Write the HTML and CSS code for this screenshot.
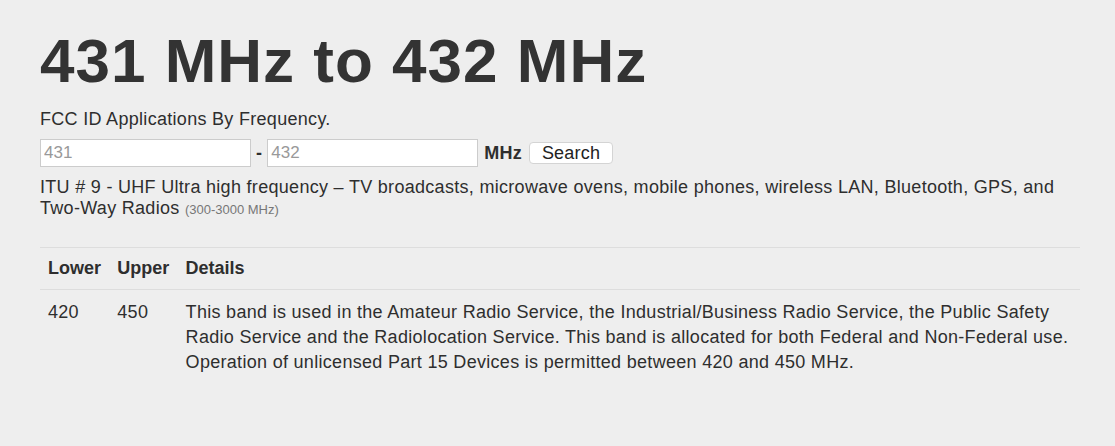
FILE: index.html
```html
<!DOCTYPE html>
<html lang="en">
<head>
    <meta charset="UTF-8">
    <meta name="viewport" content="width=device-width, initial-scale=1.0">
    <title>431 MHz to 432 MHz</title>
    <link rel="stylesheet" href="styles.css">
</head>
<body>

    <div class="container">
        <h1>431 MHz to 432 MHz</h1>
        <p class="lead">FCC ID Applications By Frequency.</p>

        <form class="freq-form">
            <input type="text" class="freq-input" placeholder="431">
            <span class="dash">-</span>
            <input type="text" class="freq-input" placeholder="432">
            <span class="unit">MHz</span>
            <button type="button" class="btn">Search</button>
        </form>

        <p class="itu">ITU # 9 - UHF Ultra high frequency &ndash; TV broadcasts, microwave ovens, mobile phones, wireless LAN, Bluetooth, GPS, and<br>Two-Way Radios <small>(300-3000 MHz)</small></p>

        <hr>

        <table class="bands">
            <thead>
                <tr>
                    <th>Lower</th>
                    <th>Upper</th>
                    <th>Details</th>
                </tr>
            </thead>
            <tbody>
                <tr>
                    <td>420</td>
                    <td>450</td>
                    <td>This band is used in the Amateur Radio Service, the Industrial/Business Radio Service, the Public Safety<br>Radio Service and the Radiolocation Service. This band is allocated for both Federal and Non-Federal use.<br>Operation of unlicensed Part 15 Devices is permitted between 420 and 450 MHz.</td>
                </tr>
            </tbody>
        </table>
    </div>

</body>
</html>
```

FILE: styles.css
```css
/* Page background and base type */
body {
    background-color: #eeeeee;
    color: #2e2e2e;
    font-family: 'Liberation Sans', Arial, sans-serif;
    font-size: 18px;
    letter-spacing: 0.3px;
    line-height: 21px;
    margin: 0;
}

.container {
    width: 1040px;
    margin: 0 0 0 40px;
    padding-top: 27px;
}

h1 {
    font-size: 62px;
    font-weight: bold;
    letter-spacing: 1px;
    line-height: 68px;
    color: #333333;
    margin: 0 0 14px 0;
}

.lead {
    margin: 0 0 9px 0;
}

.freq-form {
    display: flex;
    align-items: center;
    margin-bottom: 10px;
}

.freq-input {
    width: 211px;
    height: 28px;
    box-sizing: border-box;
    border: 1px solid #cccccc;
    background-color: #ffffff;
    font-family: inherit;
    font-size: 17px;
    padding: 2px 3px;
    margin: 0;
    color: #333333;
}

.freq-input::placeholder {
    color: #999999;
}

.dash {
    margin: 0 5px 0 5px;
    font-weight: bold;
}

.unit {
    font-weight: bold;
    letter-spacing: 0.2px;
    margin: 0 7px 0 6px;
}

.btn {
    height: 22px;
    padding: 0 12px;
    background-color: #ffffff;
    border: 1px solid #d4d4d4;
    border-radius: 4px;
    font-family: inherit;
    font-size: 18px;
    letter-spacing: 0.2px;
    color: #222222;
    line-height: 20px;
}

.itu {
    margin: 0;
}

.itu small {
    font-size: 13px;
    letter-spacing: 0;
    color: #777777;
}

hr {
    border: 0;
    border-top: 1px solid #dddddd;
    margin: 27px 0 0 0;
}

.bands {
    width: 100%;
    border-collapse: collapse;
}

.bands th,
.bands td {
    text-align: left;
    vertical-align: top;
    padding: 8px;
    line-height: 25px;
}

.bands td {
    padding-top: 10px;
}

.bands th {
    font-weight: bold;
    letter-spacing: 0;
    border-bottom: 1px solid #dddddd;
}
```
